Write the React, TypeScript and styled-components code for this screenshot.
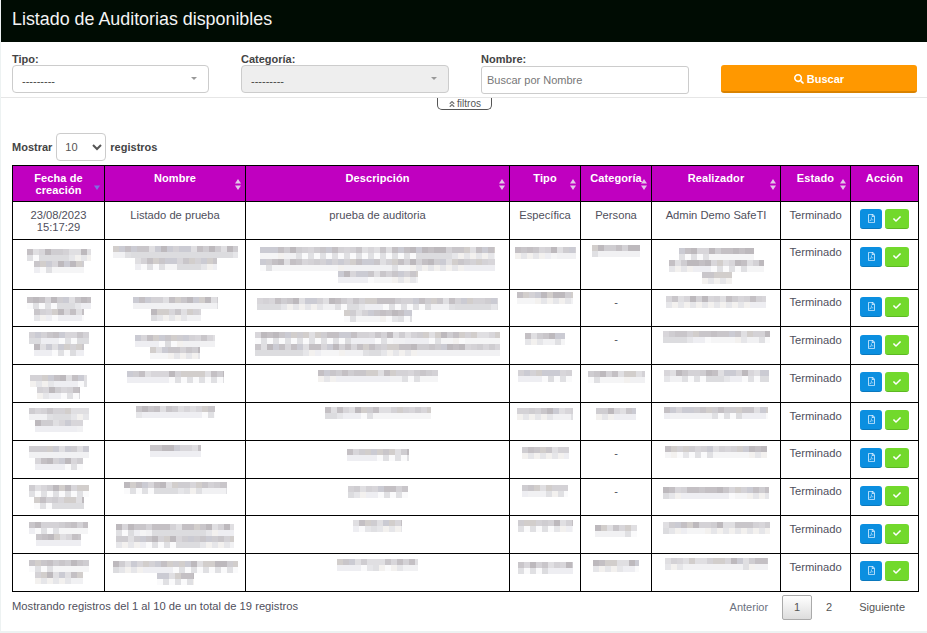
import React from "react";
import styled, { createGlobalStyle } from "styled-components";
import { FaAngleDoubleUp, FaCheck, FaRegFilePdf, FaSearch } from "react-icons/fa";

const Global = createGlobalStyle`
  html, body { margin: 0; padding: 0; background: #edf2f2; }
  body { font-family: "Liberation Sans", Arial, sans-serif; font-size: 11px; color: #4f4f5c; }
  * { box-sizing: border-box; }
`;

const Page = styled.div`
  width: 927px;
  height: 633px;
  padding: 0 0 2px 1px;
  overflow: hidden;
`;
const Panel = styled.main`
  background: #fff;
  height: 631px;
`;
const Header = styled.header`
  height: 42px;
  background: #000c03;
  color: #f4f4f4;
  font-size: 17.87px;
  line-height: 38px;
  padding-left: 11px;
`;
const Filters = styled.section`
  display: grid;
  grid-template-columns: 197px 208px 208px 196px;
  column-gap: 32px;
  height: 56px;
  padding: 10px 0 0 11px;
  border-bottom: 1px solid #e6e6e6;
`;
const Field = styled.div`
  display: flex;
  flex-direction: column;
`;
const Label = styled.label`
  font-weight: 700;
  font-size: 11px;
  line-height: 15px;
  height: 13px;
  color: #444;
`;
const FakeSelect = styled.div<{ $disabled?: boolean }>`
  height: 28px;
  border: 1px solid #ccc;
  border-radius: 4px;
  background: ${(p) => (p.$disabled ? "#eee" : "#fff")};
  display: flex;
  align-items: center;
  justify-content: space-between;
  padding: 3px 11px 0 9px;
  color: #444;
  font-size: 11px;
`;
const Caret = styled.span`
  width: 0;
  height: 0;
  margin-top: -5px;
  border-left: 3px solid transparent;
  border-right: 3px solid transparent;
  border-top: 3px solid #999;
`;
const SearchInput = styled.input`
  height: 28px;
  margin-top: 1px;
  border: 1px solid #ccc;
  border-radius: 3px;
  padding: 0 5px;
  font: 11px "Liberation Sans", Arial, sans-serif;
  &::placeholder { color: #777; opacity: 1; }
`;
const SearchButton = styled.button`
  height: 28px;
  margin-top: 13px;
  padding: 2px 0 0;
  border: 0;
  border-bottom: 2px solid #d98200;
  border-radius: 3px;
  background: #ff9800;
  color: #fff;
  font: 700 11px "Liberation Sans", Arial, sans-serif;
  display: flex;
  align-items: center;
  justify-content: center;
  gap: 3px;
`;
const TabRow = styled.div`
  display: flex;
  justify-content: center;
  padding-left: 1px;
`;
const Tab = styled.button`
  width: 55px;
  height: 12px;
  padding: 0;
  background: #fff;
  border: 1px solid #555;
  border-top: 0;
  border-radius: 0 0 5px 5px;
  color: #555;
  font: 10px/10px "Liberation Sans", Arial, sans-serif;
  display: flex;
  align-items: center;
  justify-content: center;
  gap: 1px;
  svg { width: 8px; height: 8px; color: #777; }
`;
const Length = styled.div`
  display: flex;
  align-items: center;
  gap: 4px;
  height: 28px;
  margin: 23px 0 4px 11px;
  font-weight: 700;
  color: #444;
`;
const LengthSelect = styled.select`
  width: 50px;
  height: 28px;
  border: 1px solid #ccc;
  border-radius: 4px;
  background: #fff;
  color: #555;
  padding-left: 4px;
  font: 11px "Liberation Sans", Arial, sans-serif;
`;
const Table = styled.table`
  width: 906px;
  margin-left: 11px;
  border-collapse: collapse;
  table-layout: fixed;
`;
const Th = styled.th`
  position: relative;
  background: #c000c0;
  color: #fff;
  border: 1px solid #000;
  padding: 6px 4px 0;
  vertical-align: top;
  font-size: 11px;
  line-height: 12px;
  letter-spacing: 0.1px;
`;
const SortMark = styled.svg`
  position: absolute;
  right: 4px;
  top: 13px;
  width: 6px;
  height: 11px;
`;
const Tr = styled.tr<{ $h: number }>`
  height: ${(p) => p.$h}px;
`;
const Td = styled.td`
  border: 1px solid #000;
  padding: 6.6px 4px 0;
  text-align: center;
  vertical-align: top;
  font-size: 11.2px;
  line-height: 12px;
  overflow: visible;
`;
const SmudgeCell = styled.td`
  border: 1px solid #000;
  padding: 0;
  vertical-align: top;
`;
const SmudgeImage = styled.svg<{ $top: number }>`
  display: block;
  margin: ${(p) => p.$top}px auto 0;
  max-width: 100%;
`;
const Dash = styled.span`
  display: block;
  padding-top: 6px;
  text-align: center;
`;
const Actions = styled.td`
  border: 1px solid #000;
  padding: 7.2px 0 0 9px;
  vertical-align: top;
`;
const ActionGroup = styled.div`
  display: flex;
  gap: 3px;
`;
const ActionButton = styled.button<{ $bg: string; $edge: string; $w: number }>`
  width: ${(p) => p.$w}px;
  height: 20px;
  border: 0;
  border-bottom: 1px solid ${(p) => p.$edge};
  border-radius: 3px;
  background: ${(p) => p.$bg};
  color: #cfeaff;
  padding: 0;
  display: flex;
  align-items: center;
  justify-content: center;
`;
const Foot = styled.footer`
  display: flex;
  justify-content: space-between;
  align-items: flex-start;
  padding: 3px 22px 0 11px;
`;
const Info = styled.div`
  padding-top: 4px;
  font-size: 11.2px;
  line-height: 14px;
`;
const Pager = styled.nav`
  display: flex;
  align-items: center;
  height: 25px;
  font-size: 11px;
  color: #555;
`;
const PageLink = styled.span<{ $muted?: boolean }>`
  color: ${(p) => (p.$muted ? "#6b7280" : "#555")};
`;
const PageNum = styled.span<{ $active?: boolean }>`
  width: 30px;
  height: 25px;
  margin: ${(p) => (p.$active ? "0 2px 0 14px" : "0 15px 0 0")};
  display: flex;
  align-items: center;
  justify-content: center;
  border: 1px solid ${(p) => (p.$active ? "#aaa" : "transparent")};
  border-radius: 2px;
  background: ${(p) => (p.$active ? "linear-gradient(#fff, #ddd)" : "transparent")};
`;

const Sort = ({ active }: { active?: boolean }) => (
  <SortMark viewBox="0 0 6 11" aria-hidden>
    {!active && <path d="M3 0 6 4.5H0Z" fill="#e2c6e8" />}
    <path d="M3 11 6 6.5H0Z" fill={active ? "#7f70e0" : "#e2c6e8"} />
  </SortMark>
);

type Spec = [number, number[]] | null;

const shades = ["#c9c6ca", "#cfcdd1", "#d4d2d6", "#c4c0c4", "#d8d6da", "#cbcbd3", "#d2cecc", "#e0dfe2", "#bdb9bd"];
const lights = ["#f1f1f3", "#e6e6e9", "#f5f5f6", "#e0e0e3", "#eeeef2", "#f3f1ef", "#dcdcdf", "#fafafb"];

const Smudge = ({ spec, seed }: { spec: Exclude<Spec, null>; seed: number }) => {
  const [top, lines] = spec;
  const w = Math.max(...lines);
  const h = lines.length * 12;
  let s = seed * 7919 + 13;
  const next = () => {
    s = (s * 1103515245 + 12345) & 0x7fffffff;
    return s >> 8;
  };
  const rects: React.ReactNode[] = [];
  lines.forEach((lw, li) => {
    const off = Math.round((w - lw) / 2);
    for (let row = 0; row < 2; row++) {
      for (let c = 0; c * 6 < lw; c++) {
        const pal = row === 0 ? shades : lights;
        rects.push(
          <rect
            key={`${li}-${row}-${c}`}
            x={off + c * 6}
            y={li * 12 + row * 6}
            width={Math.min(6, lw - c * 6)}
            height={6}
            fill={pal[next() % pal.length]}
          />
        );
      }
    }
  });
  return (
    <SmudgeImage $top={top} width={w} height={h} viewBox={`0 0 ${w} ${h}`} aria-hidden>
      {rects}
    </SmudgeImage>
  );
};

const ROW = 37.8;

const rows: { h: number; cells: Spec[] }[] = [
  { h: 49.8, cells: [[9, [64, 50]], [6, [125, 82]], [7, [235, 235, 80]], [7, [61]], [5, [48]], [8, [75, 95, 30]]] },
  { h: ROW, cells: [[7, [64, 50]], [7, [85, 50]], [8, [241, 68]], [2, [56]], null, [6, [100]]] },
  { h: ROW, cells: [[5, [60, 50]], [8, [80, 50]], [5, [245, 245]], [6, [40]], null, [4, [107]]] },
  { h: ROW, cells: [[10, [57, 43]], [6, [97]], [5, [120]], [5, [54]], [6, [57]], [5, [105]]] },
  { h: ROW, cells: [[5, [60, 48]], [3, [79]], [4, [106]], [5, [56]], [5, [40]], [4, [104]]] },
  { h: ROW, cells: [[5, [60, 48]], [4, [51]], [8, [62]], [6, [47]], null, [5, [102]]] },
  { h: ROW, cells: [[6, [60, 50]], [3, [103]], [7, [60]], [6, [46]], null, [8, [106]]] },
  { h: ROW, cells: [[6, [59, 45]], [8, [118, 118]], [4, [49]], [4, [55]], [9, [42]], [6, [107]]] },
  { h: ROW, cells: [[6, [60, 48]], [7, [125, 37]], [5, [81]], [8, [55]], [6, [46]], [4, [103]]] },
];

const columns = [92, 141, 264, 71, 71, 129, 70, 68];

const RowActions = () => (
  <Actions>
    <ActionGroup>
      <ActionButton $bg="#0b8fe0" $edge="#0a78bd" $w={22} aria-label="Ver PDF">
        <FaRegFilePdf size={9} />
      </ActionButton>
      <ActionButton $bg="#72d92c" $edge="#5cb822" $w={24} aria-label="Aprobar">
        <FaCheck size={8} color="#fff" />
      </ActionButton>
    </ActionGroup>
  </Actions>
);

export default function App() {
  return (
    <Page>
      <Global />
      <Panel>
        <Header>Listado de Auditorias disponibles</Header>
        <Filters>
          <Field>
            <Label>Tipo:</Label>
            <FakeSelect>
              ---------
              <Caret />
            </FakeSelect>
          </Field>
          <Field>
            <Label>Categoría:</Label>
            <FakeSelect $disabled>
              ---------
              <Caret />
            </FakeSelect>
          </Field>
          <Field>
            <Label>Nombre:</Label>
            <SearchInput placeholder="Buscar por Nombre" />
          </Field>
          <SearchButton>
            <FaSearch size={10} /> Buscar
          </SearchButton>
        </Filters>
        <TabRow>
          <Tab>
            <FaAngleDoubleUp /> filtros
          </Tab>
        </TabRow>
        <Length>
          Mostrar
          <LengthSelect defaultValue="10">
            <option>10</option>
            <option>25</option>
            <option>50</option>
          </LengthSelect>
          registros
        </Length>
        <Table>
          <colgroup>
            {columns.map((w, i) => (
              <col key={i} width={w} />
            ))}
          </colgroup>
          <thead>
            <Tr $h={36}>
              <Th>Fecha de creación<Sort active /></Th>
              <Th>Nombre<Sort /></Th>
              <Th>Descripción<Sort /></Th>
              <Th>Tipo<Sort /></Th>
              <Th>Categoría<Sort /></Th>
              <Th>Realizador<Sort /></Th>
              <Th>Estado<Sort /></Th>
              <Th>Acción</Th>
            </Tr>
          </thead>
          <tbody>
            <Tr $h={ROW}>
              <Td>23/08/2023 15:17:29</Td>
              <Td>Listado de prueba</Td>
              <Td>prueba de auditoria</Td>
              <Td>Específica</Td>
              <Td>Persona</Td>
              <Td>Admin Demo SafeTI</Td>
              <Td>Terminado</Td>
              <RowActions />
            </Tr>
            {rows.map((r, i) => (
              <Tr key={i} $h={r.h}>
                {r.cells.map((c, j) => (
                  <SmudgeCell key={j}>
                    {c ? <Smudge spec={c} seed={i * 10 + j + 1} /> : <Dash>-</Dash>}
                  </SmudgeCell>
                ))}
                <Td>Terminado</Td>
                <RowActions />
              </Tr>
            ))}
          </tbody>
        </Table>
        <Foot>
          <Info>Mostrando registros del 1 al 10 de un total de 19 registros</Info>
          <Pager>
            <PageLink $muted>Anterior</PageLink>
            <PageNum $active>1</PageNum>
            <PageNum>2</PageNum>
            <PageLink>Siguiente</PageLink>
          </Pager>
        </Foot>
      </Panel>
    </Page>
  );
}
